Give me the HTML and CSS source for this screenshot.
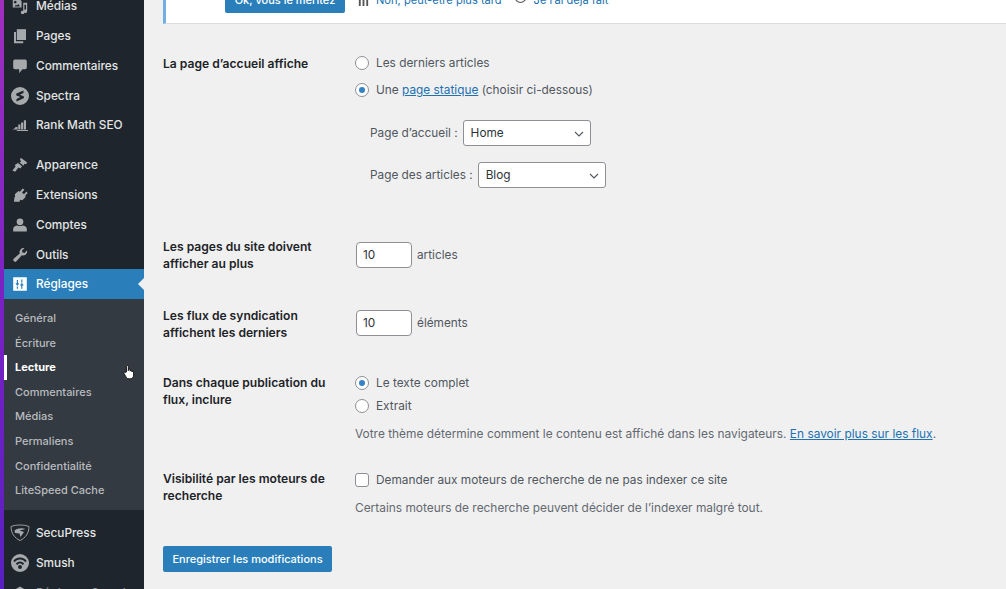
FILE: index.html
```html
<!DOCTYPE html>
<html lang="fr">
<head>
<meta charset="utf-8">
<title>Réglages de lecture</title>
<link rel="stylesheet" href="styles.css">
</head>
<body>
<div class="app">
  <div class="strip"></div>
  <nav class="sidebar">
    <ul class="menu">
      <li class="item"><svg class="ic" viewBox="0 0 20 20"><path fill-rule="evenodd" d="M1 1h8l3 3v8H1zM4 3.500a1.700 1.700 0 1 0 .01 0zM3 10.500h7L8 7.500l-2 2-1-1z"/><path d="M14 6h5v10.500a2.200 2.200 0 1 1-1.500-2V8.500h-2v9.500a2.200 2.200 0 1 1-1.500-2z"/></svg><span>Médias</span></li>
      <li class="item"><svg class="ic" viewBox="0 0 20 20"><path d="M6 1.500h11.500V15H6z"/><path d="M2.500 5H5v11.500h9V19H2.500z"/></svg><span>Pages</span></li>
      <li class="item"><svg class="ic" viewBox="0 0 20 20"><path d="M3.500 2h13A2 2 0 0 1 18.500 4v8a2 2 0 0 1-2 2H13l-4 5v-5H3.500a2 2 0 0 1-2-2V4a2 2 0 0 1 2-2z"/></svg><span>Commentaires</span></li>
      <li class="item"><svg class="ic big" viewBox="0 0 20 20"><path fill-rule="evenodd" d="M10 1a9 9 0 1 1 0 18 9 9 0 0 1 0-18zM13.500 4.500 7 7.300c-1.300.6-1.200 2 0 2.500l3.300 1.300-3.800 1.800v2.600l6.600-2.900c1.300-.6 1.200-2 0-2.500L9.800 8.800l3.700-1.700z"/></svg><span>Spectra</span></li>
      <li class="item"><svg class="ic" viewBox="0 0 20 20"><path d="M0 15.500c2 0 3.500-1 4.500-3h2.500v3zM7.800 9.500h2.700v6H7.800zM11.300 7h2.700v8.500h-2.700zM14.800 4h2.700v11.500h-2.700zM6 16.300h14v1.200H6z"/></svg><span>Rank Math SEO</span></li>
      <li class="sep"></li>
      <li class="item"><svg class="ic" viewBox="0 0 20 20"><path d="M11 1l8 6-1.500 2-2-.5-1 2.500-5-4 2-1.500-1.500-2zM7.500 7.500l5 4-2 3-2.500-1.500L4 18.500l-3.500-1.500 4-5-1-2z"/></svg><span>Apparence</span></li>
      <li class="item"><svg class="ic" viewBox="0 0 20 20"><path d="M13.500 2l2 1.500-3 3.500 2.500 2 3-3.500L19.500 7.500l-3 3.500.5 1.500-4 4-3-.5-.5 2.500H2.500L3 13l1-1-.5-3L8 5l1.800.8z"/></svg><span>Extensions</span></li>
      <li class="item"><svg class="ic" viewBox="0 0 20 20"><circle cx="10" cy="6" r="4.200"/><path d="M1.500 18v-3.500c0-2.500 2.800-3.700 5-4 1.900 1.200 5.100 1.200 7 0 2.200.3 5 1.500 5 4V18z"/></svg><span>Comptes</span></li>
      <li class="item"><svg class="ic" viewBox="0 0 20 20"><path d="M19 5.500a5 5 0 0 1-6.800 4.800L5.500 17.800a2.200 2.200 0 0 1-3.300-.2 2.200 2.200 0 0 1 0-3L9.700 8A5 5 0 0 1 15.500 1.500l-3 3 .6 2.400 2.500.6 3-3z"/></svg><span>Outils</span></li>
      <li class="item current"><svg class="ic" viewBox="0 0 20 20"><path fill-rule="evenodd" d="M1.500 1.500h17v17h-17zM6 5v4H4.200L6.700 12.500 9.200 9H7.500V5zM7.500 13H6v3h1.500zM13 16v-4h1.800L12.300 8.500 9.800 12h1.700v4zM11.500 8H13V4.500h-1.500z"/></svg><span>Réglages</span></li>
      <li class="submenu">
        <ul class="sub">
          <li>Général</li>
          <li>Écriture</li>
          <li class="active">Lecture</li>
          <li>Commentaires</li>
          <li>Médias</li>
          <li>Permaliens</li>
          <li>Confidentialité</li>
          <li>LiteSpeed Cache</li>
        </ul>
      </li>
      <li class="item sp"><svg class="ic big" viewBox="0 0 20 20"><path fill="none" stroke="currentColor" stroke-width=".9" d="M1 3.500c5-2 13-2 18 0 0 6.500-3.500 11.500-9 14C4.500 15 1 10 1 3.500z"/><path d="M4.500 7.500c3-2.500 7.500-3 11-1.500l-6 1.500 4.500 1.500-3.500 5L9.500 10.500 5 10z"/></svg><span>SecuPress</span></li>
      <li class="item"><svg class="ic big" viewBox="0 0 20 20"><path fill-rule="evenodd" d="M10 1a9 9 0 1 1 0 18 9 9 0 0 1 0-18zM10 4.500C7 4.500 4.500 6 3.300 8l1.500 1.200C5.900 7.500 7.800 6.500 10 6.500s4.100 1 5.200 2.700L16.700 8C15.500 6 13 4.500 10 4.500zM10 8.500c-1.900 0-3.500 1-4.300 2.300l1.600 1.200c.5-1 1.500-1.600 2.700-1.600s2.200.6 2.700 1.600l1.600-1.200C13.500 9.500 11.900 8.500 10 8.500zM10 12a2 2 0 0 0-2 2 2 2 0 0 0 2 2 2 2 0 0 0 2-2 2 2 0 0 0-2-2z"/></svg><span>Smush</span></li>
      <li class="item dim"><svg class="ic" viewBox="0 0 20 20"><path d="M10 2l7 4v8l-7 4-7-4V6z"/></svg><span>Réglages Smush</span></li>
    </ul>
    <span class="cursor"><svg viewBox="0 0 14 18" width="12" height="16"><path fill="#fff" stroke="#111" stroke-width="1.100" d="M4 9V2.500a1.100 1.100 0 0 1 2.200 0V7.500V6.800a1.100 1.100 0 0 1 2.200 0V8a1 1 0 0 1 2 0v1a1 1 0 0 1 2 0v3.500c0 2.500-1.500 4.500-4 4.500H7c-1.800 0-2.800-1-3.500-2.300L1.200 10.800c-.6-1.300 1-2.200 1.800-1.100z"/></svg></span>
  </nav>
  <main class="content">
    <div class="notice">
      <a class="btn notice-btn">Ok, vous le méritez</a>
      <svg class="nico" viewBox="0 0 14 14"><path d="M1 3h12v1.500H1zM2 5h2v8H2zM6 5h2v8H6zM10 5h2v8h-2z" fill="#555"/></svg>
      <a class="nlink">Non, peut-être plus tard</a>
      <svg class="nico ring" viewBox="0 0 16 16"><circle cx="8" cy="4" r="6.500" fill="none" stroke="#555" stroke-width="1.300"/></svg>
      <a class="nlink">Je l’ai déjà fait</a>
    </div>

    <form class="form">
      <div class="row r1">
        <div class="lab">La page d’accueil affiche</div>
        <div class="fld">
          <label class="opt"><span class="radio"></span>Les derniers articles</label>
          <label class="opt o2"><span class="radio on"></span><span>Une <a class="link">page statique</a> (choisir ci-dessous)</span></label>
          <div class="pick p1"><span>Page d’accueil :</span><div class="select s1">Home<svg viewBox="0 0 10 6"><path d="M1 1l4 4 4-4" fill="none" stroke="#50575e" stroke-width="1.100"/></svg></div></div>
          <div class="pick p2"><span>Page des articles :</span><div class="select s2">Blog<svg viewBox="0 0 10 6"><path d="M1 1l4 4 4-4" fill="none" stroke="#50575e" stroke-width="1.100"/></svg></div></div>
        </div>
      </div>
      <div class="row r2">
        <div class="lab">Les pages du site doivent<br>afficher au plus</div>
        <div class="fld num"><div class="input">10</div><span>articles</span></div>
      </div>
      <div class="row r3">
        <div class="lab">Les flux de syndication<br>affichent les derniers</div>
        <div class="fld num"><div class="input">10</div><span>éléments</span></div>
      </div>
      <div class="row r4">
        <div class="lab">Dans chaque publication du<br>flux, inclure</div>
        <div class="fld">
          <label class="opt"><span class="radio on"></span>Le texte complet</label>
          <label class="opt o3"><span class="radio"></span>Extrait</label>
          <p class="desc d1">Votre thème détermine comment le contenu est affiché dans les navigateurs. <a class="link">En savoir plus sur les flux</a>.</p>
        </div>
      </div>
      <div class="row r5">
        <div class="lab">Visibilité par les moteurs de<br>recherche</div>
        <div class="fld">
          <label class="opt"><span class="check"></span>Demander aux moteurs de recherche de ne pas indexer ce site</label>
          <p class="desc d2">Certains moteurs de recherche peuvent décider de l’indexer malgré tout.</p>
        </div>
      </div>
      <a class="btn save">Enregistrer les modifications</a>
    </form>
  </main>
</div>
</body>
</html>
```
FILE: styles.css
```css
* { box-sizing: border-box; }
html, body { margin: 0; height: 100%; overflow: hidden; }
body { font-family: Inter, "Liberation Sans", sans-serif; font-size: 12px; color: #50575e; background: #f0f0f1; }
ul { list-style: none; margin: 0; padding: 0; }
p { margin: 0; }
a { text-decoration: none; }

.app { display: flex; height: 589px; overflow: hidden; }
.strip { width: 4px; flex: none; background: linear-gradient(180deg, #a02fc0 0%, #7a22c4 50%, #5a1fc0 100%); }
.sidebar { position: relative; width: 140px; flex: none; background: #1f252c; overflow: hidden; }
.menu { margin-top: -8.700px; }

.item { display: flex; align-items: center; height: 29.800px; color: #e4e5e6; font-size: 11.800px; font-weight: 500; white-space: nowrap; padding-left: 7px; }
.item .ic { width: 16px; height: 16px; margin-right: 8px; fill: #a7aaad; color: #a7aaad; flex: none; margin-left: 1px; }
.item .ic.big { width: 20px; height: 20px; margin-left: -1px; margin-right: 6px; }
.item.sp { margin-top: 9px; }
.sep { height: 10px; }
.item.current { position: relative; background: #2a7fbb; color: #fff; }
.item.current .ic { fill: #fff; }
.item.current::after { content: ""; position: absolute; right: 0; top: 9px; border: 6px solid transparent; border-right-color: #f0f0f1; border-left-width: 0; }
.item.dim { color: #8a8f94; }

.submenu { background: #343a42; padding: 6.500px 0 7px; }
.sub li { height: 24.600px; display: flex; align-items: center; padding-left: 11px; color: #b9bcbf; font-size: 11px; font-weight: 500; }
.sub li.active { color: #fff; font-weight: 700; box-shadow: inset 3px 0 0 #fff; }
.cursor { position: absolute; left: 119px; top: 364px; line-height: 0; }

.content { flex: 1; min-width: 0; padding-left: 19px; }
.notice { display: flex; align-items: center; height: 37px; margin-top: -13px; background: #fff; border-left: 3px solid #72aee6; border-bottom: 1px solid #dcdcde; padding: 0 0 10px 59px; }
.btn { display: inline-flex; align-items: center; justify-content: center; background: #2a7fbb; color: #fff; border-radius: 2px; font-size: 11px; }
.notice-btn { width: 120px; height: 26px; margin-right: 12px; font-weight: 500; }
.nico { width: 13px; height: 13px; margin-right: 6px; }
.nico.ring { width: 15px; margin-left: 11px; }
.nlink { color: #2271b1; font-size: 11.100px; }

.form { display: flex; flex-direction: column; align-items: flex-start; }
.row { display: flex; width: 100%; }
.lab { width: 192px; flex: none; color: #1d2327; font-size: 12.100px; font-weight: 600; line-height: 17px; }
.fld { flex: 1; min-width: 0; }

.opt { display: flex; align-items: center; height: 20px; font-size: 11.850px; color: #50575e; }
.radio, .check { width: 14px; height: 14px; flex: none; margin-right: 7px; background: #fff; border: 1px solid #8c8f94; border-radius: 50%; position: relative; }
.check { border-radius: 3px; }
.radio.on::after { content: ""; position: absolute; inset: 3px; border-radius: 50%; background: #3582c4; }
.link { color: #2271b1; text-decoration: underline; }

.r1 { margin-top: 29px; }
.r1 .lab { padding-top: 2px; }
.o2 { margin-top: 7px; }
.pick { display: flex; align-items: center; font-size: 11.800px; padding-left: 15px; gap: 5px; }
.p1 { margin-top: 20px; }
.p2 { margin-top: 16px; }
.select { position: relative; display: flex; align-items: center; height: 26px; background: #fff; border: 1px solid #8c8f94; border-radius: 3px; padding-left: 7px; color: #2c3338; font-size: 11.800px; }
.select svg { position: absolute; right: 6px; top: 10px; width: 10px; height: 6px; }
.s1 { width: 128px; }
.s2 { width: 128px; }

.r2 { margin-top: 50px; }
.r3 { margin-top: 35px; }
.r4 { margin-top: 32px; }
.r5 { margin-top: 28px; }
.r4 .lab { padding-top: 1px; }
.num { display: flex; align-items: center; height: 30px; padding: 4px 0 0 1px; gap: 5px; font-size: 11.800px; }
.r3 .num { height: 29px; padding-top: 3px; }
.input { width: 56px; height: 26px; padding-left: 6px; display: flex; align-items: center; background: #fff; border: 1px solid #8c8f94; border-radius: 4px; color: #2c3338; font-size: 11.800px; }
.o3 { margin-top: 3px; }
.desc { font-size: 11.900px; color: #646970; line-height: 17px; }
.d1 { margin-top: 9px; }
.d2 { margin-top: 9px; }
.save { width: 169px; height: 26px; margin-top: 30px; font-weight: 500; }
```
